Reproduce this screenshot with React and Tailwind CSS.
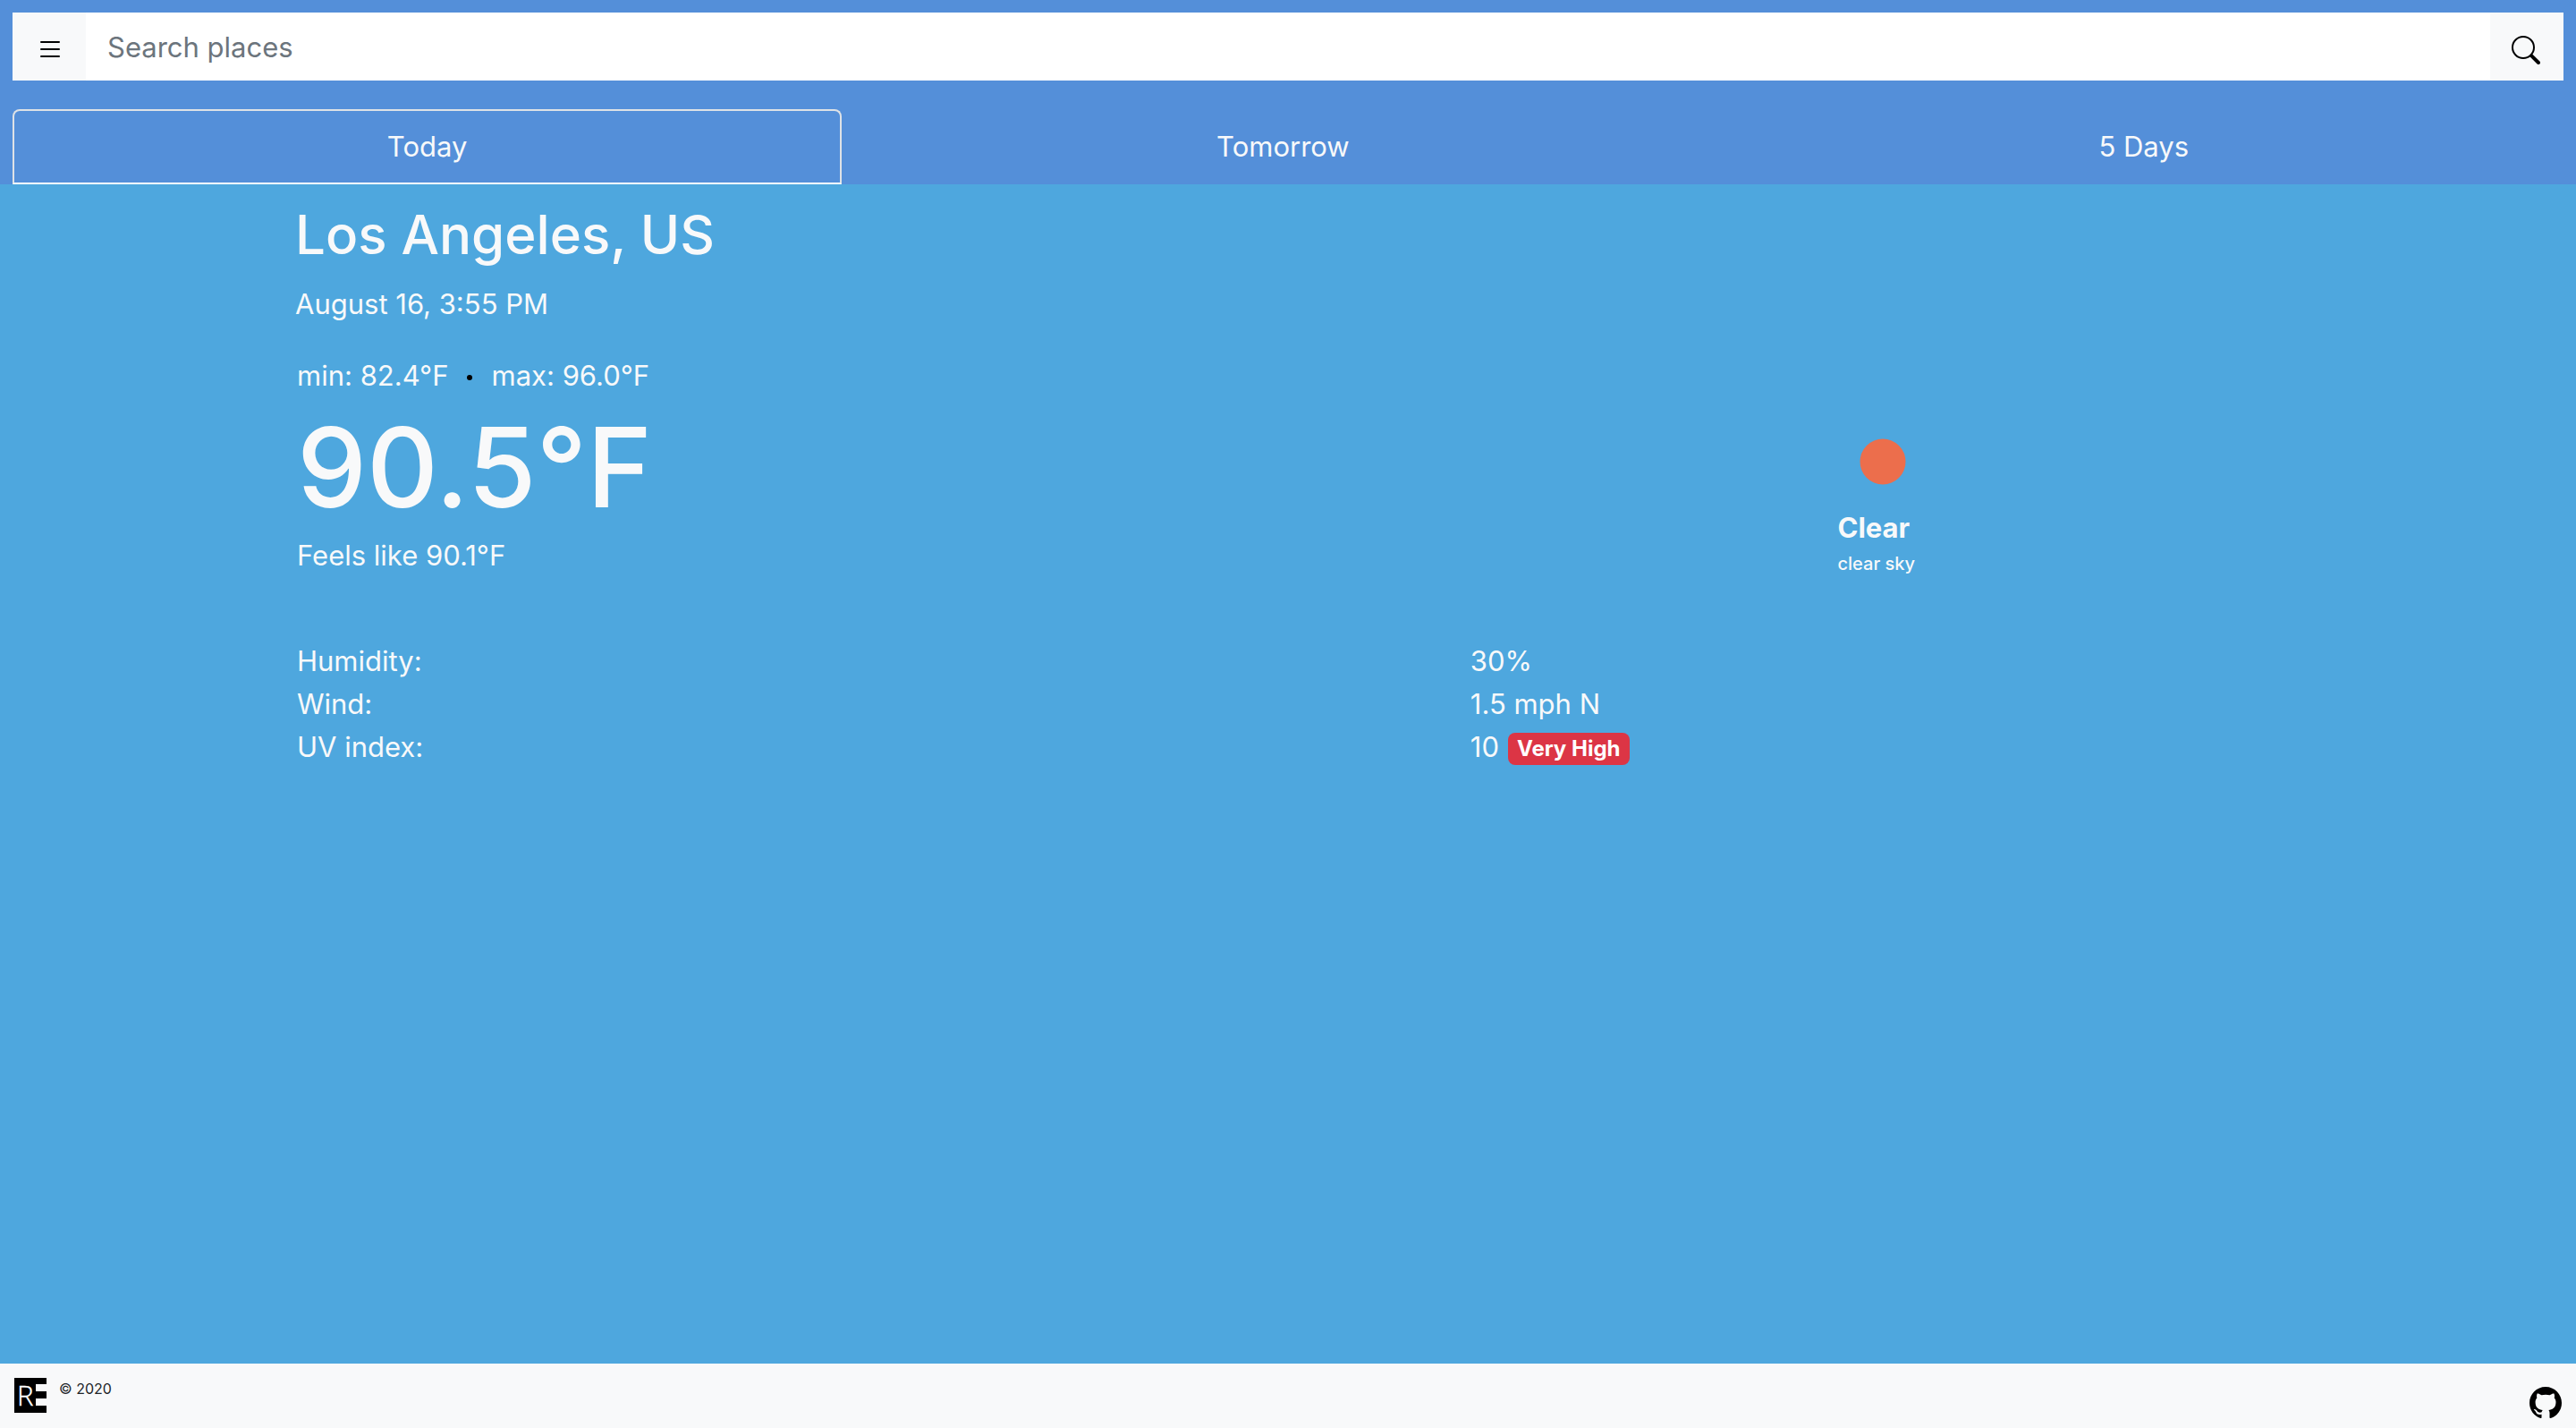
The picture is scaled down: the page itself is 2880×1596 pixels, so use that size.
import React from "react";
import { BsGithub } from "react-icons/bs";

const tabs = ["Today", "Tomorrow", "5 Days"];

function ListIcon() {
  return (
    <svg viewBox="0 0 16 16" className="size-8" fill="currentColor" aria-hidden="true">
      <path d="M2.5 11.5A.5.5 0 0 1 3 11h10a.5.5 0 0 1 0 1H3a.5.5 0 0 1-.5-.5zm0-4A.5.5 0 0 1 3 7h10a.5.5 0 0 1 0 1H3a.5.5 0 0 1-.5-.5zm0-4A.5.5 0 0 1 3 3h10a.5.5 0 0 1 0 1H3a.5.5 0 0 1-.5-.5z" />
    </svg>
  );
}

function SearchIcon() {
  return (
    <svg viewBox="0 0 16 16" className="size-8" fill="currentColor" aria-hidden="true">
      <path d="M10.442 10.442a1 1 0 0 1 1.415 0l3.85 3.85a1 1 0 0 1-1.414 1.415l-3.85-3.85a1 1 0 0 1 0-1.415z" />
      <path d="M6.5 12a5.5 5.5 0 1 0 0-11 5.5 5.5 0 0 0 0 11zM13 6.5a6.5 6.5 0 1 1-13 0 6.5 6.5 0 0 1 13 0z" />
    </svg>
  );
}

function Logo() {
  return (
    <svg viewBox="0 0 36 39" className="h-[39px] w-9 overflow-visible" aria-label="RE">
      <rect width="24" height="39" fill="#000" />
      <rect x="24" width="12" height="7" fill="#000" />
      <rect x="24" y="15" width="12" height="8" fill="#000" />
      <rect x="24" y="31" width="12" height="8" fill="#000" />
      <text x="3" y="31" fill="#fff" stroke="#fff" strokeWidth="0.4" fontSize="31" fontWeight="300" fontFamily="Open Sans, sans-serif">
        R
      </text>
    </svg>
  );
}

function Header() {
  return (
    <header className="bg-[#548fd9] px-[14px] pt-[14px]">
      <form className="flex h-[76px]" onSubmit={(e) => e.preventDefault()}>
        <button type="button" aria-label="Menu" className="flex w-[82px] items-center bg-[#f8f9fa] pt-2 pl-[26px] text-black">
          <ListIcon />
        </button>
        <input
          type="text"
          aria-label="Search places"
          placeholder="Search places"
          className="min-w-0 flex-1 bg-white px-6 pt-0.5 text-[31px] leading-12 text-[#495057] outline-none placeholder:text-[#6c757d]"
        />
        <button type="submit" aria-label="Search" className="flex w-[82px] items-center bg-[#f8f9fa] pt-2 pl-6 text-black">
          <SearchIcon />
        </button>
      </form>
      <nav className="mt-8 flex" role="tablist">
        {tabs.map((tab, i) => (
          <button
            key={tab}
            type="button"
            role="tab"
            aria-selected={i === 0}
            className={
              i === 0
                ? "flex-auto rounded-t-lg border-2 border-[#dee2e6] border-b-white px-8 py-4"
                : "flex-auto rounded-t-lg border-2 border-transparent px-8 py-4"
            }
          >
            {tab}
          </button>
        ))}
      </nav>
    </header>
  );
}

export default function App() {
  return (
    <div className="flex min-h-screen flex-col bg-[#4ea7de] font-[Inter,sans-serif] text-[31px] leading-12 text-[#f8f9fa]">
      <Header />
      <main className="mx-auto w-full max-w-[2280px] flex-1 px-[30px] pt-[18px]">
        <h1 className="text-[60px] leading-[76px] font-medium">Los Angeles, US</h1>
        <p className="mt-4">August 16, 3:55 PM</p>

        <section className="mt-8 grid grid-cols-[31fr_9fr]">
          <div className="pl-0.5">
            <p className="flex items-center">
              <span>min: 82.4°F</span>
              <span className="mr-[22px] ml-5 mt-1 size-1.5 rounded-full bg-black" />
              <span>max: 96.0°F</span>
            </p>
            <p className="mt-[3px] text-[124px] leading-[150px] font-medium">90.5°F</p>
            <p>Feels like 90.1°F</p>
          </div>
          <div className="pt-[70px] pl-1">
            <svg viewBox="0 0 100 100" className="size-[100px]" aria-hidden="true">
              <circle cx="50" cy="50" r="25.5" fill="#ec6e4c" />
            </svg>
            <p className="font-bold">Clear</p>
            <p className="text-[20px] leading-8 font-medium">clear sky</p>
          </div>
        </section>

        <table className="mt-[69px] w-full table-fixed">
          <tbody>
            <tr>
              <th scope="row" className="w-[59%] p-0 pl-0.5 text-left font-normal">Humidity:</th>
              <td className="p-0 pl-1">30%</td>
            </tr>
            <tr>
              <th scope="row" className="p-0 pl-0.5 text-left font-normal">Wind:</th>
              <td className="p-0 pl-1">1.5 mph N</td>
            </tr>
            <tr>
              <th scope="row" className="p-0 pl-0.5 text-left font-normal">UV index:</th>
              <td className="p-0 pl-1">
                <div className="flex items-center gap-2.5">
                  <span>10</span>
                  <span className="mt-1 rounded-lg bg-[#dc3545] px-[10px] text-[24px] leading-9 font-bold text-white">
                    Very High
                  </span>
                </div>
              </td>
            </tr>
          </tbody>
        </table>
      </main>
      <footer className="flex h-[72px] items-start bg-[#f8f9fa] px-4 pt-4 text-[#212529]">
        <Logo />
        <small className="ml-[14px] text-[16px] leading-6">© 2020</small>
        <a href="#github" aria-label="GitHub" className="mt-[10px] ml-auto text-black">
          <BsGithub className="size-9" />
        </a>
      </footer>
    </div>
  );
}
